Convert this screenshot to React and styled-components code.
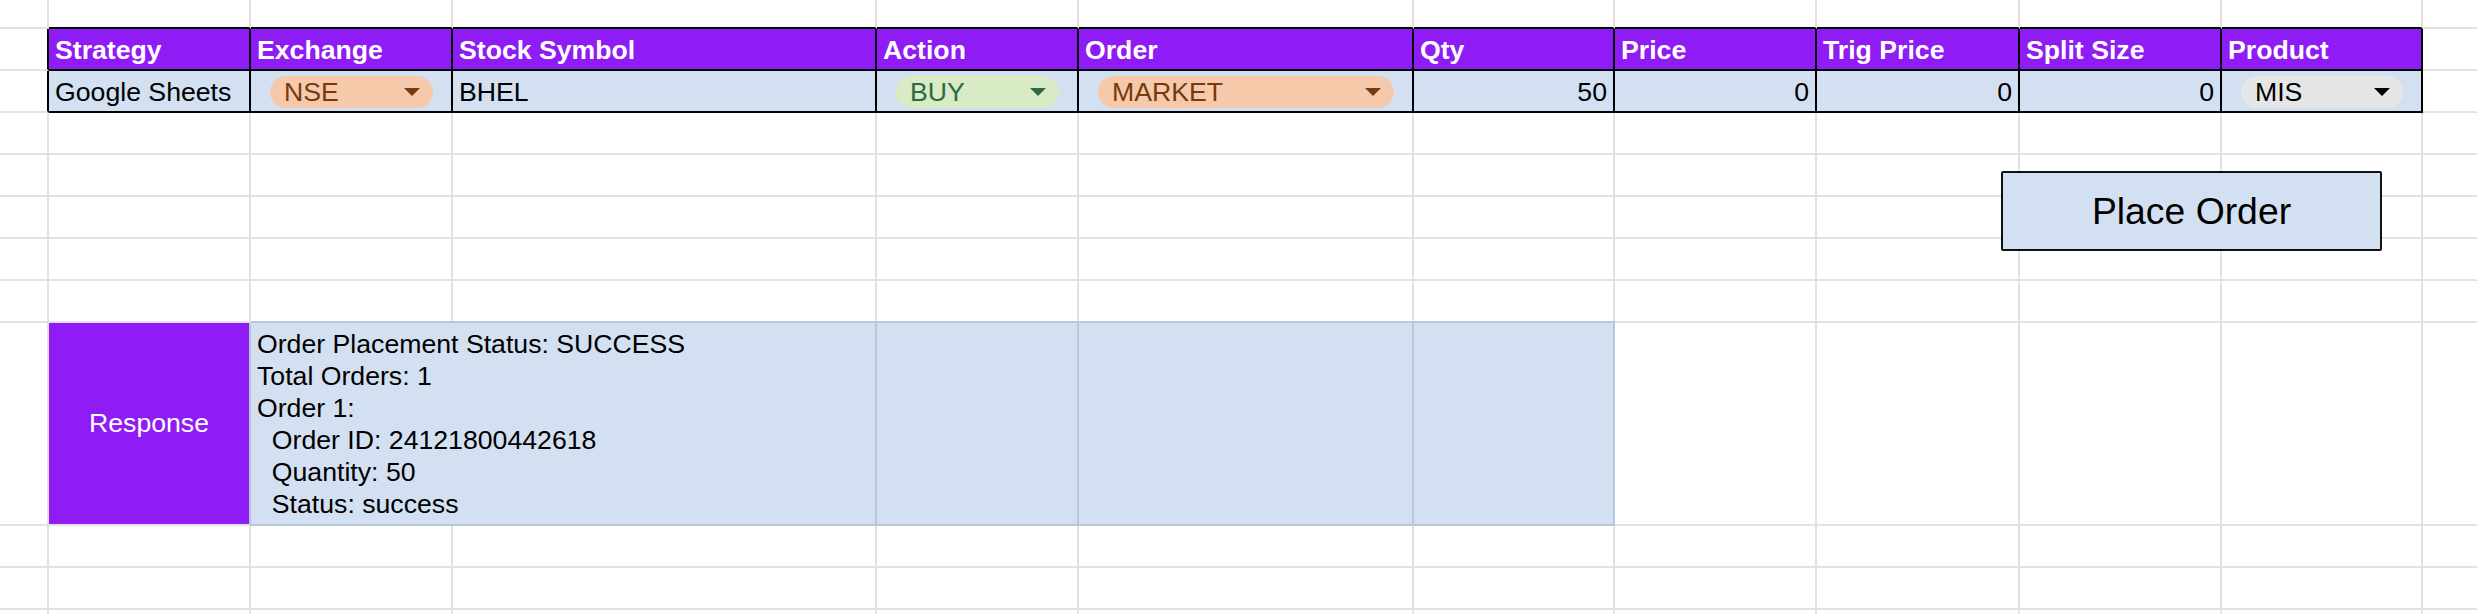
import React from "react";
import styled, { createGlobalStyle, css } from "styled-components";

const GRID = "#e2e2e2";
const BLACK = "#000000";
const PURPLE = "#8f1cf4";
const LIGHT_BLUE = "#d3e0f1";
const BLUE_EDGE = "#b9c6d8";

const COLUMNS = [49, 202, 202, 424, 202, 335, 201, 202, 203, 202, 201, 55];

const GlobalStyle = createGlobalStyle`
  html, body {
    margin: 0;
    padding: 0;
    background: #ffffff;
    overflow: hidden;
  }
  body {
    font-family: "Liberation Sans", Arial, sans-serif;
    font-size: 26.67px;
    color: #000;
  }
`;

const Sheet = styled.div`
  position: relative;
  display: grid;
  grid-template-columns: ${COLUMNS.map((w) => `${w}px`).join(" ")};
  grid-template-rows: 29px repeat(7, 42px) 203px;
  grid-auto-rows: 42px;
  width: 2478px;
  height: 614px;
  overflow: hidden;
`;

const Cell = styled.div`
  box-sizing: border-box;
  display: flex;
  align-items: ${({ $valign }) =>
    $valign === "center" ? "center" : $valign === "top" ? "flex-start" : "flex-end"};
  justify-content: ${({ $align }) =>
    $align === "right" ? "flex-end" : $align === "center" ? "center" : "flex-start"};
  padding: 0 6px 3px 6px;
  min-width: 0;
  white-space: nowrap;
  overflow: hidden;
  background: ${({ $bg }) => $bg || "#ffffff"};
  border-right: 2px solid ${({ $right }) => $right || GRID};
  border-bottom: 2px solid ${({ $bottom }) => $bottom || GRID};
  ${({ $span }) => $span && css`grid-column: span ${$span};`}
`;

const HeaderCell = styled(Cell)`
  background: ${PURPLE};
  color: #ffffff;
  font-weight: 700;
  border-right-color: ${BLACK};
  border-bottom-color: ${BLACK};
`;

const DataCell = styled(Cell)`
  background: ${LIGHT_BLUE};
  border-right-color: ${BLACK};
  border-bottom-color: ${BLACK};
`;

const ChipCell = styled(DataCell)`
  align-items: center;
  padding: 2px 18px 0 19px;
`;

const CHIP_TONES = {
  peach: { bg: "#f6c9ab", fg: "#753a10" },
  green: { bg: "#d9ebc5", fg: "#2b6a46" },
  gray: { bg: "#e6e6e6", fg: "#000000" },
};

const Chip = styled.div`
  flex: 1;
  height: 32px;
  border-radius: 16px;
  display: flex;
  align-items: center;
  justify-content: space-between;
  padding: 0 13px 0 14px;
  background: ${({ $tone }) => CHIP_TONES[$tone].bg};
  color: ${({ $tone }) => CHIP_TONES[$tone].fg};
`;

const Caret = styled.span`
  width: 0;
  height: 0;
  border-left: 8px solid transparent;
  border-right: 8px solid transparent;
  border-top: 8px solid ${({ $color }) => $color};
`;

const ResponseLabel = styled(Cell)`
  background: ${PURPLE};
  color: #ffffff;
  align-items: center;
  justify-content: center;
  padding: 0;
  border-right-color: ${BLUE_EDGE};
`;

const ResponseBlock = styled(Cell)`
  background: ${LIGHT_BLUE};
  border-right-color: ${BLUE_EDGE};
  border-bottom-color: ${BLUE_EDGE};
  box-shadow: 0 -2px 0 ${BLUE_EDGE};
  flex-direction: column;
  justify-content: flex-end;
  align-items: flex-start;
  padding: 0 6px 4px 6px;
`;

const ResponseLine = styled.div`
  line-height: 32px;
  white-space: pre;
`;

const PlaceOrderButton = styled.button`
  position: absolute;
  left: 2001px;
  top: 171px;
  width: 381px;
  height: 80px;
  box-sizing: border-box;
  margin: 0;
  padding: 0;
  border: 2px solid #111;
  border-radius: 2px;
  background: ${LIGHT_BLUE};
  font-family: "Liberation Sans", Arial, sans-serif;
  font-size: 37.33px;
  color: #000;
  display: flex;
  align-items: center;
  justify-content: center;
  cursor: pointer;
`;

const headers = [
  "Strategy",
  "Exchange",
  "Stock Symbol",
  "Action",
  "Order",
  "Qty",
  "Price",
  "Trig Price",
  "Split Size",
  "Product",
];

const responseLines = [
  "Order Placement Status: SUCCESS",
  "Total Orders: 1",
  "Order 1:",
  "  Order ID: 24121800442618",
  "  Quantity: 50",
  "  Status: success",
];

function BlankCells({ from = 0, to = 12, row }) {
  const cells = [];
  for (let c = from; c < to; c++) {
    cells.push(<Cell key={`${row}-${c}`} $right={c === 11 ? "transparent" : GRID} />);
  }
  return cells;
}

function SelectChip({ tone, value }) {
  const fg = CHIP_TONES[tone].fg;
  return (
    <ChipCell>
      <Chip $tone={tone}>
        <span>{value}</span>
        <Caret $color={fg} />
      </Chip>
    </ChipCell>
  );
}

export default function App() {
  return (
    <>
      <GlobalStyle />
      <Sheet>
        {/* partial top row */}
        <Cell />
        {headers.map((h) => (
          <Cell key={`top-${h}`} $bottom={BLACK} />
        ))}
        <Cell $right="transparent" />

        {/* header row */}
        <Cell $right={BLACK} />
        {headers.map((h) => (
          <HeaderCell key={h}>{h}</HeaderCell>
        ))}
        <Cell $right="transparent" />

        {/* data row */}
        <Cell $right={BLACK} />
        <DataCell>Google Sheets</DataCell>
        <SelectChip tone="peach" value="NSE" />
        <DataCell>BHEL</DataCell>
        <SelectChip tone="green" value="BUY" />
        <SelectChip tone="peach" value="MARKET" />
        <DataCell $align="right">50</DataCell>
        <DataCell $align="right">0</DataCell>
        <DataCell $align="right">0</DataCell>
        <DataCell $align="right">0</DataCell>
        <SelectChip tone="gray" value="MIS" />
        <Cell $right="transparent" />

        {/* empty rows */}
        {[3, 4, 5, 6, 7].map((r) => (
          <BlankCells key={`r${r}`} row={r} />
        ))}

        {/* response row */}
        <Cell />
        <ResponseLabel>Response</ResponseLabel>
        <ResponseBlock $span={2}>
          {responseLines.map((l) => (
            <ResponseLine key={l}>{l}</ResponseLine>
          ))}
        </ResponseBlock>
        <ResponseBlock />
        <ResponseBlock />
        <ResponseBlock />
        <BlankCells from={7} row={8} />

        {/* trailing rows */}
        {[9, 10, 11].map((r) => (
          <BlankCells key={`r${r}`} row={r} />
        ))}

        <PlaceOrderButton type="button">Place Order</PlaceOrderButton>
      </Sheet>
    </>
  );
}
